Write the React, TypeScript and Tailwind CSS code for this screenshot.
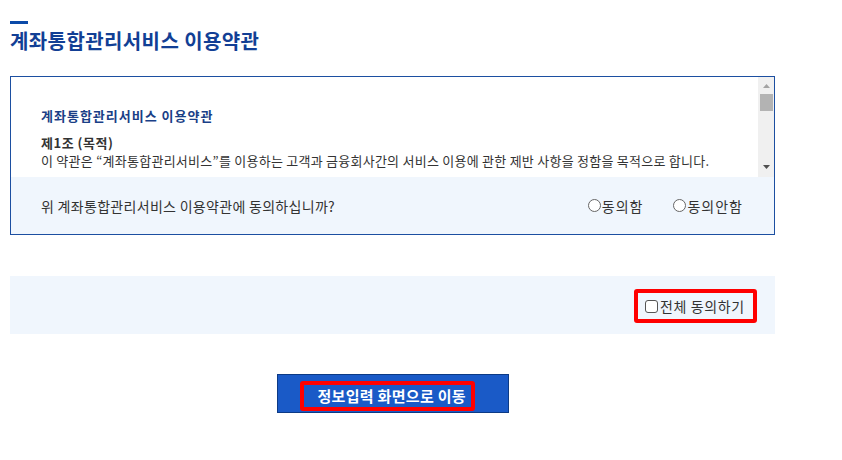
const FONT = "font-['Noto_Sans_CJK_KR','Noto_Sans',sans-serif]";

function Radio({ label }: { label: string }) {
    return (
        <label className="flex items-center gap-[1px] text-[14px] tracking-[1px] text-[#333]">
            <span className="w-[13px] h-[13px] rounded-full border border-[#666] bg-white" />
            <span className="leading-[20px]">{label}</span>
        </label>
    );
}

function ScrollBar() {
    return (
        <div className="w-[16px] h-full bg-[#f0f0f0] flex flex-col items-center">
            <svg width="9" height="6" viewBox="0 0 9 6" className="mt-[6px]">
                <polygon points="4.5,1 8,5 1,5" fill="#a3a3a3" />
            </svg>
            <div className="mt-[5px] w-[13px] h-[17px] bg-[#b3b3b3]" />
            <div className="flex-1" />
            <svg width="9" height="6" viewBox="0 0 9 6" className="mb-[7px]">
                <polygon points="1,1 8,1 4.5,5" fill="#505050" />
            </svg>
        </div>
    );
}

function App() {
    return (
        <div className={`min-h-[460px] bg-white ${FONT}`}>
            <div className="pl-[10px] w-[775px]">
                <div className="pt-[21px]">
                    <div className="w-[18px] h-[3px] bg-[#0b4aa8]" />
                </div>
                <h2 className="mt-1 text-[20px] leading-[26px] font-bold tracking-[0.4px] text-[#123f95]">
                    계좌통합관리서비스 이용약관
                </h2>

                <div className="mt-[22px] border border-[#1c4fa1]">
                    <div className="h-[100px] flex">
                        <div className="flex-1 overflow-hidden pl-[30px] pt-[29px]">
                            <h3 className="text-[13px] leading-[20px] font-bold tracking-[1px] text-[#1a3f87] mb-2">
                                계좌통합관리서비스 이용약관
                            </h3>
                            <p className="text-[13px] leading-[18px] font-bold tracking-[0.5px] text-[#333]">제1조 (목적)</p>
                            <p className="text-[13px] leading-[18px] tracking-[0.25px] text-[#333] whitespace-nowrap">
                                이 약관은 “계좌통합관리서비스”를 이용하는 고객과 금융회사간의 서비스 이용에 관한 제반 사항을 정함을 목적으로 합니다.
                            </p>
                        </div>
                        <ScrollBar />
                    </div>
                    <div className="h-[57px] bg-[#f0f6fd] flex items-center justify-between pl-[30px] pr-[31px]">
                        <p className="text-[14px] leading-[20px] tracking-[0.3px] text-[#333]">
                            위 계좌통합관리서비스 이용약관에 동의하십니까?
                        </p>
                        <div className="flex items-center gap-[30px]">
                            <Radio label="동의함" />
                            <Radio label="동의안함" />
                        </div>
                    </div>
                </div>

                <div className="mt-[41px] h-[58px] bg-[#f0f6fd] flex justify-end items-start pt-[13px] pr-[18px]">
                    <label className="h-[34px] w-[123px] border-4 border-[#ff0000] rounded-[3px] flex items-center pl-[7px] text-[14px] tracking-[0.6px] text-[#333]">
                        <span className="w-[13px] h-[13px] rounded-[3px] border border-[#555] bg-white" />
                        <span className="ml-[2px] leading-[20px] whitespace-nowrap">전체 동의하기</span>
                    </label>
                </div>

                <div className="mt-[40px] flex justify-center">
                    <button
                        type="button"
                        className="w-[232px] h-[39px] bg-[#1a5ac7] border border-[#0c3a85] flex items-start pl-[22px] pt-[6px]"
                    >
                        <span className="w-[175px] h-[30px] border-4 border-[#ff0000] rounded-[3px] flex items-center pl-[14px] text-[15px] font-bold tracking-[0.3px] text-white whitespace-nowrap">
                            정보입력 화면으로 이동
                        </span>
                    </button>
                </div>
            </div>
        </div>
    );
}

export default App;
